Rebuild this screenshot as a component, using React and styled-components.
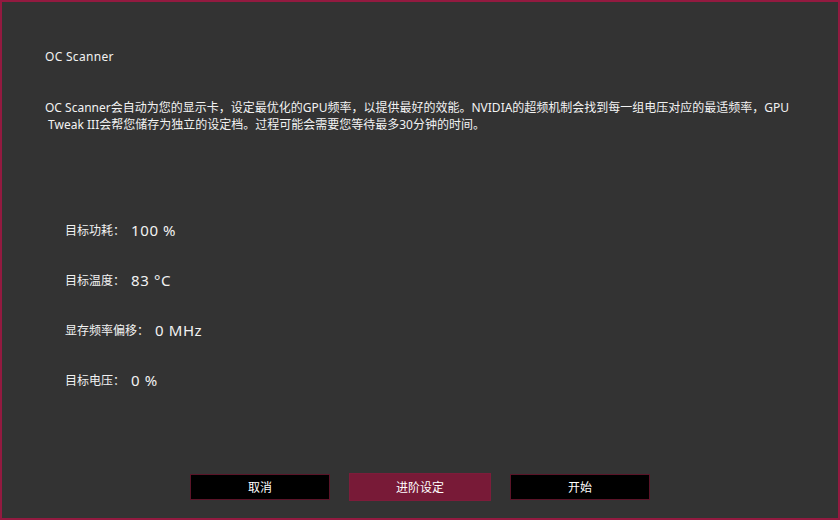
import React from "react";
import styled, { createGlobalStyle } from "styled-components";

const GlobalStyle = createGlobalStyle`
	html, body {
		margin: 0;
		padding: 0;
		background: #333333;
	}
	* {
		box-sizing: border-box;
	}
`;

const settings = [
	{ label: "目标功耗：", value: "100 %" },
	{ label: "目标温度：", value: "83 °C" },
	{ label: "显存频率偏移：", value: "0 MHz" },
	{ label: "目标电压：", value: "0 %" },
];

const App = () => {
	return (
		<>
			<GlobalStyle />
			<Window>
				<Title>OC Scanner</Title>
				<Description>
					OC Scanner会自动为您的显示卡，设定最优化的GPU频率，以提供最好的效能。NVIDIA的超频机制会找到每一组电压对应的最适频率，GPU
					<br />
					&nbsp;Tweak III会帮您储存为独立的设定档。过程可能会需要您等待最多30分钟的时间。
				</Description>

				<Settings>
					{settings.map((item) => (
						<Row key={item.label}>
							<Label>{item.label}</Label>
							<Value>{item.value}</Value>
						</Row>
					))}
				</Settings>

				<Actions>
					<Button>取消</Button>
					<Button primary>进阶设定</Button>
					<Button>开始</Button>
				</Actions>
			</Window>
		</>
	);
};

const Window = styled.div`
	width: 840px;
	height: 520px;
	border: 2px solid #931a40;
	background: #333333;
	color: #f2f2f2;
	font-family: "Noto Sans", "Noto Sans CJK SC", sans-serif;
	display: flex;
	flex-direction: column;
	padding: 0 0 0 43px;
`;

const Title = styled.div`
	margin-top: 46px;
	font-size: 12px;
	line-height: 17px;
	letter-spacing: 0.3px;
`;

const Description = styled.div`
	margin-top: 34px;
	font-size: 12px;
	line-height: 17px;
	white-space: nowrap;
`;

const Settings = styled.div`
	margin-top: 86px;
	padding-left: 20px;
	display: flex;
	flex-direction: column;
	gap: 28px;
`;

const Row = styled.div`
	display: flex;
	align-items: center;
	height: 22px;
`;

const Label = styled.span`
	font-size: 12px;
	margin-right: 6px;
`;

const Value = styled.span`
	font-size: 15px;
	letter-spacing: 0.6px;
`;

const Actions = styled.div`
	margin-top: auto;
	margin-bottom: 17px;
	margin-left: 145px;
	display: flex;
	align-items: center;
	gap: 19px;
`;

const Button = styled.button`
	width: ${(p) => (p.primary ? "142px" : "140px")};
	height: ${(p) => (p.primary ? "28px" : "26px")};
	background: ${(p) => (p.primary ? "#781a37" : "#000000")};
	border: 1px solid ${(p) => (p.primary ? "#7d1c3a" : "#5a1428")};
	color: #ffffff;
	font-family: "Noto Sans", "Noto Sans CJK SC", sans-serif;
	font-size: 12px;
	padding: 0;
	cursor: pointer;
`;

export default App;
